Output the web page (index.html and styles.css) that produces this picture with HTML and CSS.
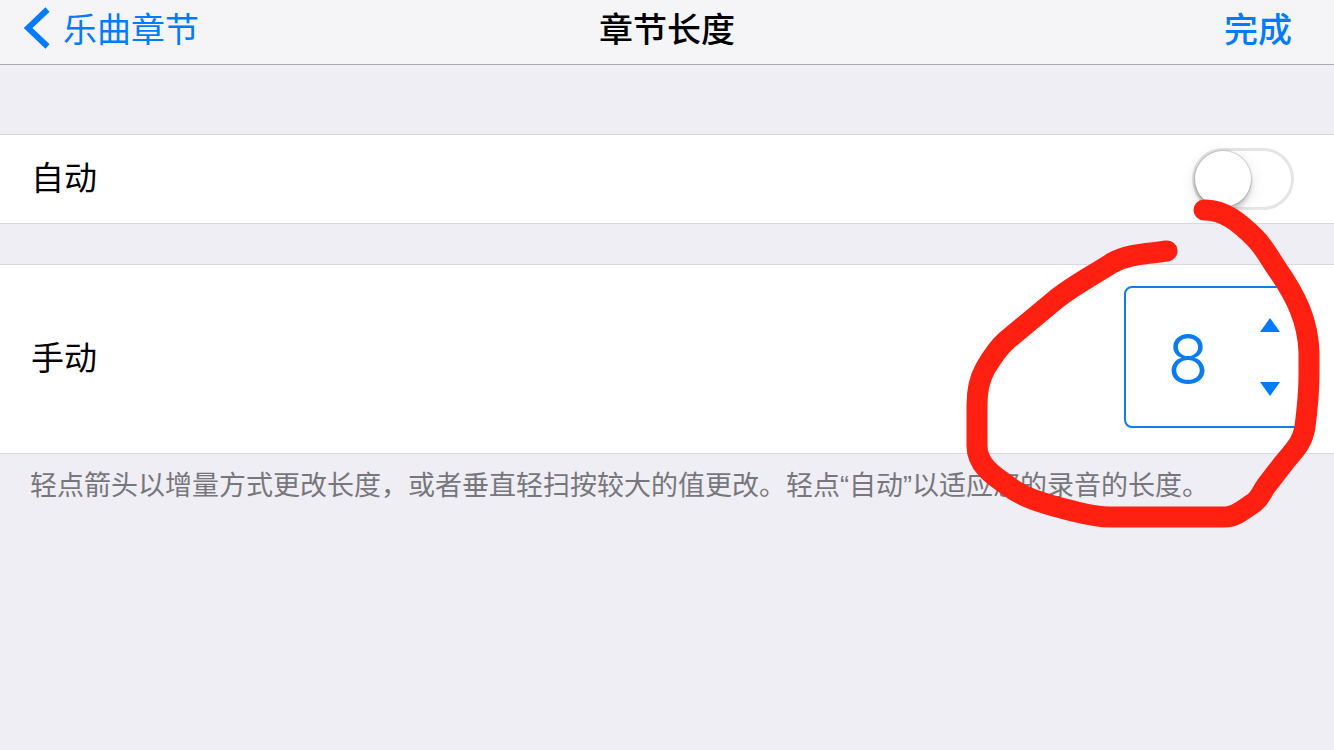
FILE: index.html
```html
<!DOCTYPE html>
<html lang="zh-CN">
<head>
<meta charset="utf-8">
<meta name="viewport" content="width=device-width, initial-scale=1">
<title>章节长度</title>
<link rel="stylesheet" href="styles.css">
</head>
<body>
<header class="navbar">
  <a class="back" href="#">
    <svg class="chevron" viewBox="0 0 26 42" aria-hidden="true"><path d="M23.500 2.500 4 21l19.500 18.500"/></svg>
    <span>乐曲章节</span>
  </a>
  <h1 class="title">章节长度</h1>
  <button class="done" type="button">完成</button>
</header>
<main class="settings">
  <section class="row">
    <label for="auto">自动</label>
    <input class="switch" id="auto" type="checkbox" role="switch">
  </section>
  <section class="row row-tall">
    <label for="length">手动</label>
    <div class="stepper">
      <input class="value" id="length" type="text" inputmode="numeric" value="8">
      <div class="arrows">
        <button class="arrow" type="button" aria-label="增加"><svg viewBox="0 0 20 14" aria-hidden="true"><path d="M10 0 20 14H0z"/></svg></button>
        <button class="arrow" type="button" aria-label="减少"><svg viewBox="0 0 20 14" aria-hidden="true"><path d="M0 0h20L10 14z"/></svg></button>
      </div>
    </div>
  </section>
  <p class="hint">轻点箭头以增量方式更改长度，或者垂直轻扫按较大的值更改。轻点“自动”以适应您的录音的长度。</p>
</main>
<svg class="marker" viewBox="950 190 384 350" aria-hidden="true">
  <path d="M1204 210C1224 209 1241 224 1255 238C1264 247 1269 257 1277 269C1296 296 1308 321 1309 352V375C1309 393 1307 411 1305 427C1302 445 1293 451 1283 464L1266 486C1261 493 1260 499 1252 504C1244 509 1236 517 1225 517H1110C1096 517 1085 514 1073 511C1040 503 1022 497 1007 485C992 475 977 464 977 446V405C977 390 980 378 985 369C992 357 999 347 1007 340L1054 301C1072 286 1092 276 1112 263C1128 254 1146 254 1167 251"/>
</svg>
</body>
</html>
```
FILE: styles.css
```css
:root {
  --blue: #007aff;
  --line: #d9d9dd;
}
* { box-sizing: border-box; }
body {
  position: relative;
  margin: 0;
  min-height: 100vh;
  background: #efeef4;
  color: #000;
  font-family: "Liberation Sans", "Noto Sans CJK SC", sans-serif;
  font-size: 33px;
  line-height: 48px;
}
button, input { margin: 0; padding: 0; border: 0; background: none; font: inherit; color: inherit; }
.navbar {
  display: grid;
  grid-template-columns: 1fr auto 1fr;
  align-items: center;
  padding: 6px 24px 10px;
  border-bottom: 1px solid #a9a8ae;
  background: #f5f5f8;
  font-size: 34px;
}
.back {
  display: flex;
  align-items: center;
  gap: 13px;
  color: var(--blue);
  text-decoration: none;
}
.chevron {
  width: 26px;
  height: 42px;
  margin-bottom: 4px;
  fill: none;
  stroke: var(--blue);
  stroke-width: 6;
}
.title { margin: 0; font-size: 34px; font-weight: 500; }
.done { justify-self: end; margin-right: 18px; color: var(--blue); font-weight: 500; }
.settings { padding-top: 69px; }
.row {
  display: flex;
  align-items: center;
  justify-content: space-between;
  min-height: 90px;
  padding: 0 40px 0 31px;
  border: solid var(--line);
  border-width: 1px 0;
  background: #fff;
}
.row-tall { min-height: 190px; margin-top: 40px; padding-right: 32px; }
.switch {
  appearance: none;
  display: flex;
  width: 102px;
  height: 62px;
  border: 3px solid #e5e5e5;
  border-radius: 31px;
  background: #fff;
}
.switch::before {
  content: "";
  width: 56px;
  height: 56px;
  border-radius: 50%;
  background: #fff;
  box-shadow: 0 0 1px 1px rgba(0, 0, 0, .16), 0 5px 4px rgba(0, 0, 0, .16), 0 4px 16px rgba(0, 0, 0, .12);
}
.switch:checked { justify-content: flex-end; background: #4cd964; }
.stepper {
  display: flex;
  width: 178px;
  height: 142px;
  margin-bottom: 4px;
  border: 2px solid #147ce5;
  border-radius: 8px;
  color: #0a7bf2;
}
.value {
  flex: 1;
  min-width: 0;
  padding-top: 4px;
  font: 300 68px/80px Inter, sans-serif;
  text-align: center;
}
.arrows {
  display: grid;
  align-content: center;
  gap: 50px;
  width: 50px;
}
.arrow { display: flex; padding-left: 10px; }
.arrow svg { width: 20px; height: 14px; fill: var(--blue); }
.hint {
  margin: 0;
  padding: 12px 30px;
  color: #77767c;
  font-size: 27px;
  line-height: 40px;
}
.marker {
  position: absolute;
  top: 190px;
  right: 0;
  width: 384px;
  height: 350px;
  fill: none;
  stroke: #ff2012;
  stroke-width: 21;
  stroke-linecap: round;
  stroke-linejoin: round;
  pointer-events: none;
}
```
